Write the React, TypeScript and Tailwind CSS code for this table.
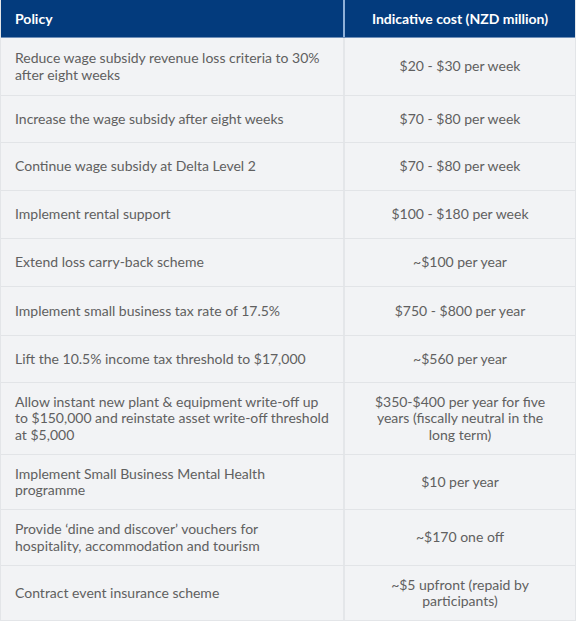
import React from 'react';

interface Row {
  policy: string[];
  cost: string[];
  h: string;
}

const rows: Row[] = [
  { policy: ['Reduce wage subsidy revenue loss criteria to 30%', 'after eight weeks'], cost: ['$20 - $30 per week'], h: 'h-[58px]' },
  { policy: ['Increase the wage subsidy after eight weeks'], cost: ['$70 - $80 per week'], h: 'h-[47px]' },
  { policy: ['Continue wage subsidy at Delta Level 2'], cost: ['$70 - $80 per week'], h: 'h-[48px]' },
  { policy: ['Implement rental support'], cost: ['$100 - $180 per week'], h: 'h-[48px]' },
  { policy: ['Extend loss carry-back scheme'], cost: ['~$100 per year'], h: 'h-[48px]' },
  { policy: ['Implement small business tax rate of 17.5%'], cost: ['$750 - $800 per year'], h: 'h-[49px]' },
  { policy: ['Lift the 10.5% income tax threshold to $17,000'], cost: ['~$560 per year'], h: 'h-[47px]' },
  {
    policy: [
      'Allow instant new plant & equipment write-off up',
      'to $150,000 and reinstate asset write-off threshold',
      'at $5,000',
    ],
    cost: ['$350-$400 per year for five', 'years (fiscally neutral in the', 'long term)'],
    h: 'h-[72px]',
  },
  { policy: ['Implement Small Business Mental Health', 'programme'], cost: ['$10 per year'], h: 'h-[55px]' },
  {
    policy: ['Provide \u2018dine and discover\u2019 vouchers for', 'hospitality, accommodation and tourism'],
    cost: ['~$170 one off'],
    h: 'h-[56px]',
  },
  { policy: ['Contract event insurance scheme'], cost: ['~$5 upfront (repaid by', 'participants)'], h: 'h-[54px]' },
];

function Lines({ lines }: { lines: string[] }) {
  return (
    <>
      {lines.map((l, i) => (
        <span key={i} className="block whitespace-nowrap">
          {l}
        </span>
      ))}
    </>
  );
}

export default function App() {
  return (
    <div
      className="w-[576px] h-[623px] bg-white"
      style={{ fontFamily: 'Lato, "Noto Sans", sans-serif' }}
    >
      <div className="border-x border-[#e3e5e8] border-b">
        <div className="flex h-[38px] bg-[#033b7d] text-white text-[14px] font-bold border-b border-[#6f8fb8]">
          <div className="w-[342px] flex items-center pl-[14px]">Policy</div>
          <div className="w-[2px] bg-[#8fb0d8]" />
          <div className="flex-1 flex items-center justify-center">Indicative cost (NZD million)</div>
        </div>
        {rows.map((r, i) => (
          <div
            key={i}
            className={`flex ${r.h} bg-[#f2f3f5] text-[#606060] text-[14px] leading-[16.5px] ${
              i < rows.length - 1 ? 'border-b border-[#e2e4e7]' : ''
            }`}
          >
            <div className="w-[342px] flex flex-col justify-center pl-[14px]">
              <Lines lines={r.policy} />
            </div>
            <div className="w-[2px] bg-[#e4e6e9]" />
            <div className="flex-1 flex flex-col justify-center items-center text-center">
              <Lines lines={r.cost} />
            </div>
          </div>
        ))}
      </div>
    </div>
  );
}
